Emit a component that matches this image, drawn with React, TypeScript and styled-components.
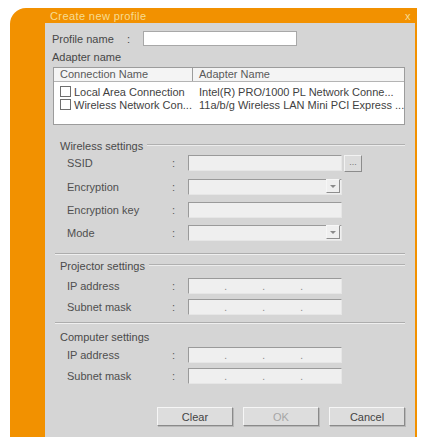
import React from 'react';
import styled, { createGlobalStyle } from 'styled-components';

const GlobalStyle = createGlobalStyle`
  body {
    margin: 0;
    background: #ffffff;
    font-family: "Liberation Sans", Arial, sans-serif;
    font-size: 11px;
    color: #474747;
  }
`;

const ORANGE = '#f29100';

const Window = styled.div`
  margin: 8px 0 0 10px;
  width: 407px;
  height: 429px;
  background: ${ORANGE};
  border-top-left-radius: 16px;
  display: flex;
  flex-direction: column;
`;

const TitleBar = styled.div`
  height: 15px;
  display: flex;
  align-items: center;
  justify-content: space-between;
  padding: 0 6px 0 40px;
  color: #f7dc92;
  font-size: 11px;
  letter-spacing: 0.4px;
`;

const Body = styled.div`
  flex: 1;
  display: flex;
  padding: 0 2px 0 35px;
`;

const Panel = styled.div`
  flex: 1;
  background: #d5d5d5;
  display: flex;
  flex-direction: column;
  padding: 0 10px 0 7px;
`;

const ProfileRow = styled.div`
  margin-top: 8px;
  height: 15px;
  display: flex;
  align-items: center;
`;

const ProfileLabel = styled.span`
  width: 75px;
`;

const ProfileColon = styled.span`
  width: 16px;
`;

const WhiteInput = styled.div`
  width: 152px;
  height: 13px;
  background: #ffffff;
  border: 1px solid #a8a8a8;
`;

const Caption = styled.div<{ $top: number }>`
  margin-top: ${p => p.$top}px;
  height: 13px;
  line-height: 13px;
`;

const Table = styled.div`
  margin: 3px 0 0 1px;
  height: 56px;
  background: #ffffff;
  border: 1px solid #9c9c9c;
  display: flex;
  flex-direction: column;
`;

const HeaderRow = styled.div`
  height: 13px;
  display: grid;
  grid-template-columns: 139px 1fr;
  border-bottom: 1px solid #b4b4b4;
  background: #f4f4f4;
`;

const HeaderCell = styled.div<{ $divider?: boolean }>`
  padding-left: 6px;
  line-height: 13px;
  color: #5a5a5a;
  border-right: ${p => (p.$divider ? '1px solid #9c9c9c' : 'none')};
`;

const DataRow = styled.div<{ $top: number }>`
  margin-top: ${p => p.$top}px;
  height: 13px;
  display: grid;
  grid-template-columns: 139px 1fr;
  align-items: center;
`;

const Cell = styled.div`
  display: flex;
  align-items: center;
  white-space: nowrap;
  overflow: hidden;
  padding-left: 6px;
  color: #3f3f3f;
`;

const CheckBox = styled.span`
  width: 9px;
  height: 9px;
  border: 1px solid #6e6e6e;
  background: #fff;
  margin-right: 3px;
  flex: none;
`;

const GroupHeading = styled.div<{ $top: number; $lined?: boolean }>`
  margin: ${p => p.$top}px 0 0 8px;
  height: 13px;
  display: flex;
  align-items: center;
  gap: 4px;
  color: #4a4a4a;
  &::after {
    content: '';
    flex: 1;
    height: 0;
    margin-top: -2px;
    border-top: ${p => (p.$lined ? '1px solid #b0b0b0' : 'none')};
    border-bottom: ${p => (p.$lined ? '1px solid #ececec' : 'none')};
  }
`;

const Separator = styled.div<{ $top: number }>`
  margin: ${p => p.$top}px 0 0 3px;
  border-top: 1px solid #adadad;
  border-bottom: 1px solid #efefef;
`;

const FieldRow = styled.div<{ $top: number }>`
  margin-top: ${p => p.$top}px;
  height: 16px;
  display: flex;
  align-items: center;
  padding-left: 15px;
`;

const FieldLabel = styled.span`
  width: 105px;
  color: #4f4f4f;
`;

const FieldColon = styled.span`
  width: 16px;
  color: #5a5a5a;
`;

const Sunken = styled.div<{ $w?: number }>`
  width: ${p => p.$w ?? 152}px;
  height: 14px;
  background: #efefef;
  border: 1px solid;
  border-color: #9a9a9a #e6e6e6 #e6e6e6 #9a9a9a;
  display: flex;
  align-items: flex-end;
  justify-content: flex-end;
`;

const DropArrow = styled.div`
  width: 12px;
  height: 12px;
  margin: 0 1px 1px 0;
  border: 1px solid;
  border-color: #f6f6f6 #8e8e8e #8e8e8e #f6f6f6;
  display: flex;
  align-items: center;
  justify-content: center;
  &::before {
    content: '';
    border-left: 3px solid transparent;
    border-right: 3px solid transparent;
    border-top: 3px solid #8a8a8a;
  }
`;

const DotsButton = styled.div`
  margin-left: 2px;
  width: 16px;
  height: 15px;
  background: #dcdcdc;
  border: 1px solid;
  border-color: #f2f2f2 #8c8c8c #8c8c8c #f2f2f2;
  font-size: 9px;
  color: #777;
  line-height: 12px;
  text-align: center;
`;

const IpBox = styled.div`
  width: 152px;
  height: 14px;
  background: #efefef;
  border: 1px solid;
  border-color: #9a9a9a #e6e6e6 #e6e6e6 #9a9a9a;
  display: grid;
  grid-template-columns: 38px 38px 38px 1fr;
`;

const IpDot = styled.span`
  text-align: right;
  font-size: 10px;
  line-height: 16px;
  color: #888;
`;

const ButtonBar = styled.div`
  margin-top: 23px;
  display: flex;
  justify-content: flex-end;
  gap: 10px;
`;

const Button = styled.div<{ $disabled?: boolean }>`
  width: 74px;
  height: 17px;
  background: #dddddd;
  border: 1px solid;
  border-color: #f6f6f6 #8a8a8a #8a8a8a #f6f6f6;
  box-shadow: 1px 1px 0 #b8b8b8;
  color: ${p => (p.$disabled ? '#a6a6a6' : '#444444')};
  display: flex;
  align-items: center;
  justify-content: center;
`;

const Field: React.FC<{ label: string; top: number; children: React.ReactNode }> = ({ label, top, children }) => (
  <FieldRow $top={top}>
    <FieldLabel>{label}</FieldLabel>
    <FieldColon>:</FieldColon>
    {children}
  </FieldRow>
);

const IpField: React.FC = () => (
  <IpBox>
    <IpDot>.</IpDot>
    <IpDot>.</IpDot>
    <IpDot>.</IpDot>
    <span />
  </IpBox>
);

export default function App() {
  return (
    <>
      <GlobalStyle />
      <Window>
        <TitleBar>
          <span>Create new profile</span>
          <span>x</span>
        </TitleBar>
        <Body>
          <Panel>
            <ProfileRow>
              <ProfileLabel>Profile name</ProfileLabel>
              <ProfileColon>:</ProfileColon>
              <WhiteInput />
            </ProfileRow>

            <Caption $top={5}>Adapter name</Caption>
            <Table>
              <HeaderRow>
                <HeaderCell $divider>Connection Name</HeaderCell>
                <HeaderCell>Adapter Name</HeaderCell>
              </HeaderRow>
              <DataRow $top={3}>
                <Cell><CheckBox />Local Area Connection</Cell>
                <Cell>Intel(R) PRO/1000 PL Network Conne...</Cell>
              </DataRow>
              <DataRow $top={0}>
                <Cell><CheckBox />Wireless Network Con...</Cell>
                <Cell>11a/b/g Wireless LAN Mini PCI Express ...</Cell>
              </DataRow>
            </Table>

            <GroupHeading $top={14} $lined>Wireless settings</GroupHeading>
            <Field label="SSID" top={3}>
              <Sunken />
              <DotsButton>...</DotsButton>
            </Field>
            <Field label="Encryption" top={8}>
              <Sunken><DropArrow /></Sunken>
            </Field>
            <Field label="Encryption key" top={7}>
              <Sunken />
            </Field>
            <Field label="Mode" top={7}>
              <Sunken><DropArrow /></Sunken>
            </Field>

            <Separator $top={12} />
            <GroupHeading $top={4} $lined>Projector settings</GroupHeading>
            <Field label="IP address" top={6}>
              <IpField />
            </Field>
            <Field label="Subnet mask" top={5}>
              <IpField />
            </Field>

            <Separator $top={7} />
            <GroupHeading $top={6}>Computer settings</GroupHeading>
            <Field label="IP address" top={4}>
              <IpField />
            </Field>
            <Field label="Subnet mask" top={5}>
              <IpField />
            </Field>

            <ButtonBar>
              <Button>Clear</Button>
              <Button $disabled>OK</Button>
              <Button>Cancel</Button>
            </ButtonBar>
          </Panel>
        </Body>
      </Window>
    </>
  );
}
